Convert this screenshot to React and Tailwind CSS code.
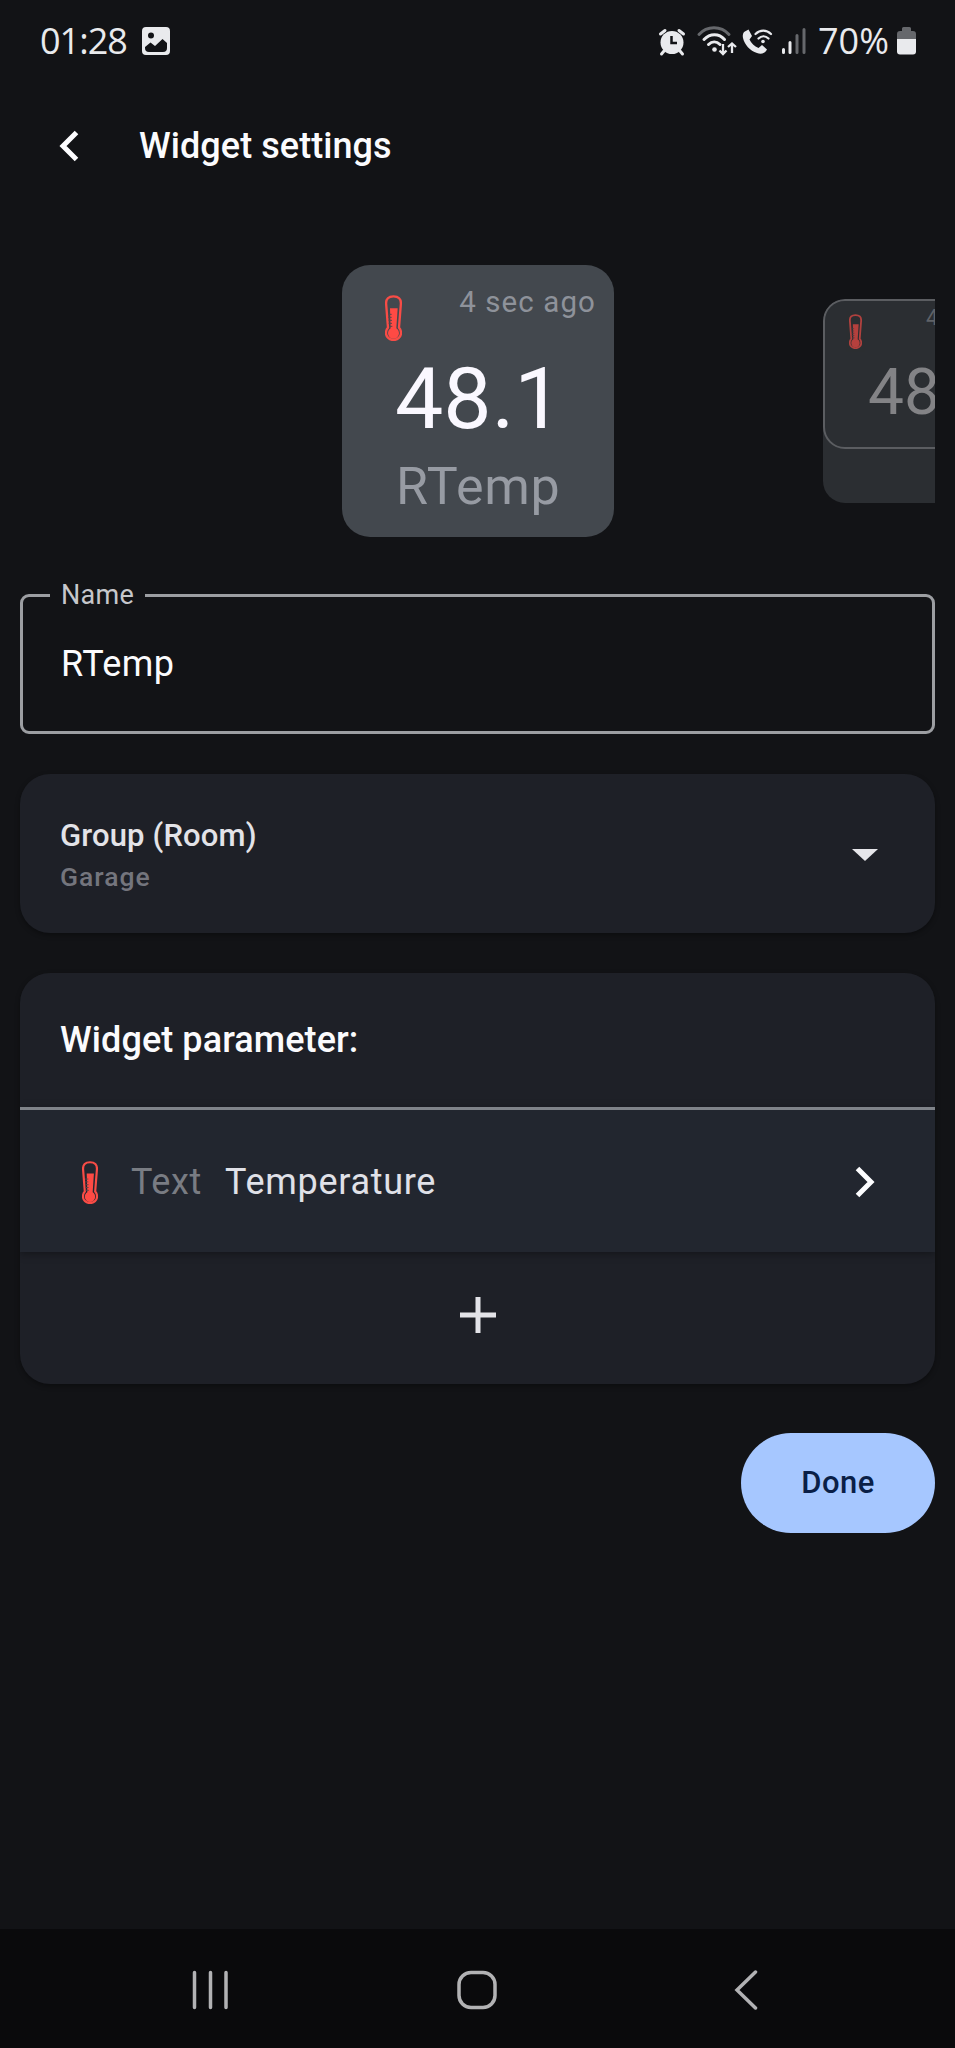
import React from "react";

function Thermometer({ className }) {
  return (
    <svg viewBox="0 0 51 138" className={className} fill="none" preserveAspectRatio="none">
      <path
        d="M9 98 L3.500 28 C2 11 11 4 25.500 4 C40 4 49 11 47.500 28 L42 98 C46 102 48 108 48 114 A22.500 21 0 0 1 3 114 C3 108 5 102 9 98 Z"
        stroke="#f84c46"
        strokeWidth="7"
      />
      <path d="M15 40 H38 L34 100 C39 103 42 108 42 115 A16.500 16.500 0 0 1 9 115 C9 108 12 103 17 100 Z" fill="#ff4a44" />
      <path d="M10 58H20M10 67H20M11 76H21M11 85H21M12 94H22" stroke="#5b4549" strokeWidth="3" />
    </svg>
  );
}

function StatusBar() {
  return (
    <div className="flex h-[82px] items-center pl-10 pr-[39px] text-[#e9eaed]">
      <span className="w-[102px] font-['Open_Sans',sans-serif] text-[36px] leading-[40px] tracking-[-1px]">01:28</span>
      <svg className="size-7" viewBox="0 0 28 28">
        <path
          fillRule="evenodd"
          fill="#e9eaed"
          d="M4 0H24Q28 0 28 4V24Q28 28 24 28H4Q0 28 0 24V4Q0 0 4 0ZM9 5.500A3 3 0 1 0 9 11.500A3 3 0 1 0 9 5.500ZM3 21V20L8.500 15.500L13 19L20.500 12L25 16V21Q25 25 21 25H7Q3 25 3 21Z"
        />
      </svg>
      <svg className="ml-auto h-8 w-[150px]" viewBox="657 24 150 32" fill="none">
        <g>
          <circle cx="672" cy="41.500" r="11.500" fill="#e9eaed" />
          <path d="M660.500 33L665 29.500M683.500 33L679 29.500M664 50L661.500 53M680 50L682.500 53" stroke="#e9eaed" strokeWidth="3" strokeLinecap="round" />
          <path d="M671.500 35V42H677" stroke="#121316" strokeWidth="2.500" />
        </g>
        <g strokeWidth="3" strokeLinecap="round">
          <path d="M699 33.500C707 24.500 721 24.500 729 33.500" stroke="#66686c" />
          <path d="M704 38.500C710 32 719 32 724.500 38.500" stroke="#e9eaed" />
          <path d="M708.500 43.500C712 40 716.500 40 720 43.500" stroke="#e9eaed" />
        </g>
        <circle cx="714.500" cy="48.500" r="2.300" fill="#e9eaed" />
        <path d="M723 43V53M719.500 49.500L723 53L726.500 49.500M732 52V42.500M728 46L732 42.500L736 46" stroke="#e9eaed" strokeWidth="2.300" />
        <path
          fill="#e9eaed"
          d="M744 31L748.500 28.500L752 35L749.500 38.500C751 42 754.500 45.500 758.500 47L762 44L767 48.500C765 52.500 761 53.500 757 52C750 50 744.500 43.500 743 37C742.500 34.500 742.800 32.500 744 31Z"
        />
        <path d="M755.500 33C760 28.500 766.500 28.500 771 33M758.500 37.500C761.500 34.500 765.500 34.500 768.500 37.500" stroke="#e9eaed" strokeWidth="2.200" strokeLinecap="round" />
        <circle cx="763" cy="40.500" r="1.800" fill="#e9eaed" />
        <g strokeWidth="3" strokeLinecap="round">
          <path d="M783.500 48.500V51.500M790 41.500V51.500" stroke="#e9eaed" />
          <path d="M797 34.500V51.500M804 28.500V51.500" stroke="#66686c" />
        </g>
      </svg>
      <span className="ml-[11px] w-[79px] font-['Open_Sans',sans-serif] text-[36px] leading-[40px]">70%</span>
      <svg className="h-7 w-[19px]" viewBox="0 0 19 28">
        <path fill="#66686c" d="M5 1.500Q5 0 6.500 0H12.500Q14 0 14 1.500V4H16Q19 4 19 7V12H0V7Q0 4 3 4H5Z" />
        <path fill="#e9eaed" d="M0 12H19V24.500Q19 27.500 16 27.500H3Q0 27.500 0 24.500Z" />
      </svg>
    </div>
  );
}

function Header() {
  return (
    <header className="flex h-32 items-center pl-[59px]">
      <svg className="h-8 w-5" viewBox="0 0 20 32" fill="none">
        <path d="M17.500 2.500L4 16L17.500 29.500" stroke="#fdfdff" strokeWidth="5" />
      </svg>
      <h1 className="ml-[60px] text-[36px] leading-[40px] font-medium tracking-[0.06px] text-[#fbfbfd]">Widget settings</h1>
    </header>
  );
}

function PreviewCarousel() {
  return (
    <section className="mr-5 flex h-[272px] items-center overflow-hidden pl-[342px]">
      <div className="h-[272px] w-[272px] shrink-0 rounded-[28px] bg-[#43484e]">
        <div className="flex h-[91px] justify-between pt-[17px] pr-[18px] pl-[43px]">
          <Thermometer className="mt-[13px] h-[46px] w-[17px]" />
          <span className="text-[29.500px] leading-[40px] tracking-[1.1px] text-[#8e929a]">4 sec ago</span>
        </div>
        <div className="flex h-[86px] items-center pl-[53px] text-[86px] leading-[86px] text-[#faf8ff]">48.1</div>
        <div className="pt-[15px] pl-[54px] text-[52px] leading-[60px] tracking-[0.7px] text-[#979ba3]">RTemp</div>
      </div>
      <div className="ml-[209px] h-[204px] w-[204px] shrink-0 overflow-hidden rounded-[22px] bg-[#2b2e32]">
        <div className="h-[150px] rounded-[22px] border-2 border-[#5b5d61]">
          <div className="flex h-[60px] justify-between pt-[4px] pl-[24px]">
            <Thermometer className="mt-[9px] h-[35px] w-[13px] opacity-65" />
            <span className="w-[99px] text-[22px] leading-[26px] whitespace-nowrap text-[#5f6267]">4 sec ago</span>
          </div>
          <div className="pl-[43px] text-[64px] leading-[64px] text-[#838386]">48.1</div>
        </div>
      </div>
    </section>
  );
}

function NameField() {
  return (
    <fieldset className="mx-5 mt-[49px] h-[148px] rounded-[9px] border-[3px] border-[#9c9ea2] pl-[27px]">
      <legend className="h-[19px] px-[11px] text-[27px] leading-[19px] tracking-[0.3px] text-[#c6c7cb]">Name</legend>
      <div className="pt-[39px] pl-[11px] text-[36px] leading-[40px] tracking-[0.4px] text-[#fbfbfd]">RTemp</div>
    </fieldset>
  );
}

function GroupCard() {
  return (
    <section className="mx-5 mt-10 flex h-[159px] items-center justify-between rounded-[30px] bg-[#1e2027] pr-[57px] pl-[40px] shadow-[0_2px_5px_rgba(0,0,0,0.35)]">
      <div className="pt-[2px]">
        <div className="text-[31px] leading-[44px] font-medium tracking-[0.15px] text-[#e3e3e8]">Group (Room)</div>
        <div className="text-[26.500px] leading-[38px] font-medium tracking-[1px] text-[#74757d]">Garage</div>
      </div>
      <svg className="mt-[2px] h-3 w-[26px]" viewBox="0 0 26 12">
        <path d="M0 0H26L13 12Z" fill="#e6e6ea" />
      </svg>
    </section>
  );
}

function ParameterCard() {
  return (
    <section className="mx-5 mt-10 h-[411px] overflow-hidden rounded-[30px] bg-[#1e2027] shadow-[0_2px_5px_rgba(0,0,0,0.35)]">
      <h2 className="flex h-[134px] items-center pl-[40px] text-[36px] font-medium tracking-[0.08px] text-[#fbfbfd]">Widget parameter:</h2>
      <div className="flex h-[145px] items-center border-t-[3px] border-[#7f8389] bg-[#22262f] pt-[2px] pr-[60px] pl-[62px] text-[36px] shadow-[0_2px_8px_rgba(0,0,0,0.35)]">
        <Thermometer className="h-[43px] w-4" />
        <span className="ml-[33px] w-[94px] tracking-[0.6px] text-[#797c83]">Text</span>
        <span className="tracking-[0.7px] text-[#e0e1e8]">Temperature</span>
        <svg className="ml-auto h-8 w-5" viewBox="0 0 20 32" fill="none">
          <path d="M2.500 2.500L16 16L2.500 29.500" stroke="#fdfdff" strokeWidth="5" />
        </svg>
      </div>
      <div className="flex h-[126px] items-center justify-center">
        <svg className="ml-px size-9" viewBox="0 0 36 36">
          <path d="M18 0V36M0 18H36" stroke="#e3e3e8" strokeWidth="5" />
        </svg>
      </div>
    </section>
  );
}

function NavigationBar() {
  return (
    <nav className="mt-auto flex h-[119px] items-center bg-[#0a0a0c] pt-[3px] pr-[197px] pl-[192px]">
      <svg className="h-10 w-[37px]" viewBox="0 0 37 40">
        <path d="M2.500 2.500V37.500M18.500 2.500V37.500M34 2.500V37.500" stroke="#b2b2b4" strokeWidth="3.500" strokeLinecap="round" />
      </svg>
      <svg className="ml-[228px] size-10" viewBox="0 0 40 40" fill="none">
        <rect x="2" y="2.500" width="36" height="35" rx="12" stroke="#b2b2b4" strokeWidth="3.500" />
      </svg>
      <svg className="ml-auto h-10 w-6" viewBox="0 0 24 40" fill="none">
        <path d="M21.500 2L3 20L21.500 38" stroke="#b2b2b4" strokeWidth="3.500" strokeLinecap="round" />
      </svg>
    </nav>
  );
}

export default function App() {
  return (
    <main className="flex h-[2048px] w-[955px] flex-col overflow-hidden bg-[#121316] font-['Roboto',sans-serif]">
      <StatusBar />
      <Header />
      <div className="h-[55px]" />
      <PreviewCarousel />
      <NameField />
      <GroupCard />
      <ParameterCard />
      <div className="flex justify-end pt-[49px] pr-5">
        <button className="h-[100px] w-[194px] rounded-full bg-[#a6c7ff] text-[31px] font-medium tracking-[0.4px] text-[#0a1f47]">Done</button>
      </div>
      <NavigationBar />
    </main>
  );
}
